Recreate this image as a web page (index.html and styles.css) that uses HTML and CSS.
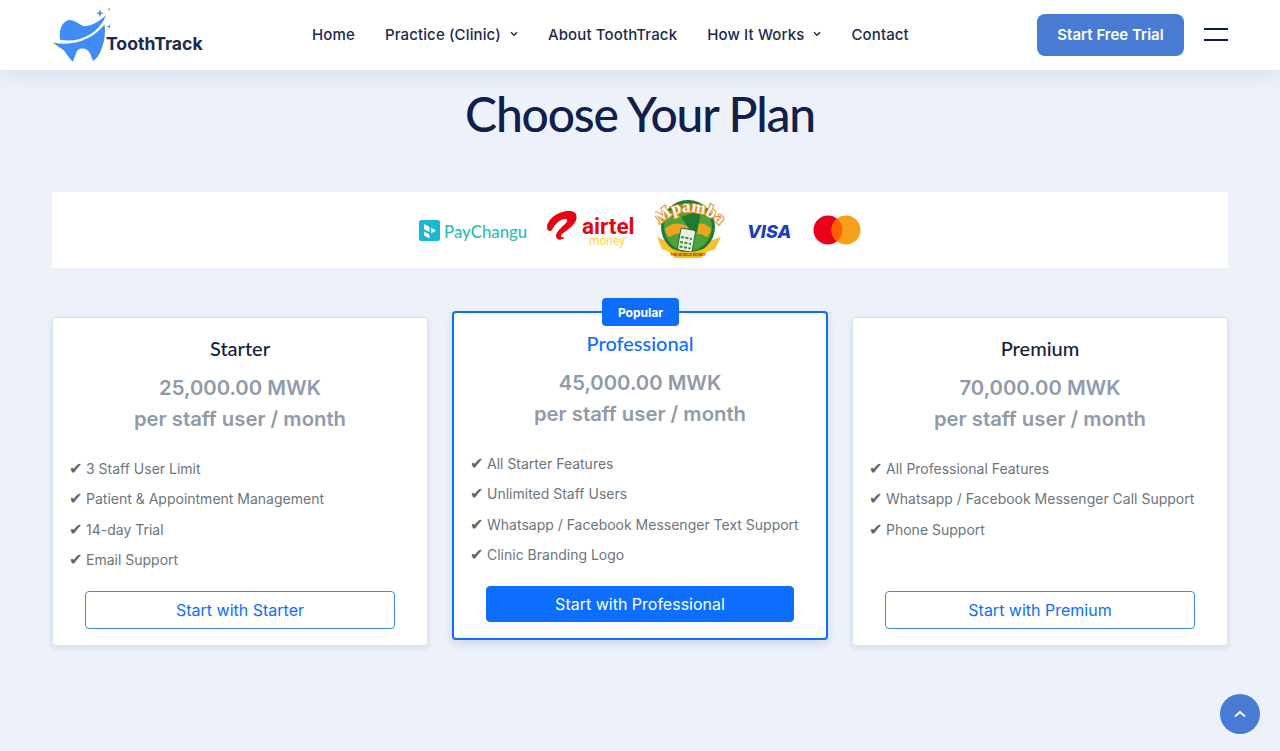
FILE: index.html
```html
<!DOCTYPE html>
<html lang="en">
<head>
<meta charset="utf-8">
<title>ToothTrack - Choose Your Plan</title>
<link rel="stylesheet" href="styles.css">
</head>
<body>
<header class="site-header">
  <div class="header-inner">
    <a class="logo" href="#">
      <svg class="logo-mark" viewBox="30 20 180 175" aria-hidden="true">
        <path fill="#3f8cf4" d="M60 122C56 96 62 72 84 63C98 60 112 72 130 81C150 82 178 68 198 48C190 72 172 92 150 106C124 122 92 128 60 122Z"/>
        <path fill="#3f8cf4" d="M38 130C96 142 156 124 194 76C198 104 192 134 184 152C178 168 170 178 160 186C152 170 150 148 126 148C106 148 108 172 98 188C88 176 80 166 72 154C60 146 48 138 38 130Z"/>
        <path fill="#3f8cf4" d="M180 30L183 39L191 42L183 45L180 54L177 45L169 42L177 39Z"/>
        <path fill="#3f8cf4" d="M215 17L218.500 26.500L228 30L218.500 33.500L215 43L211.500 33.500L203 30L211.500 26.500Z"/>
        <path fill="#3f8cf4" d="M212 70L215 79L224 82L215 85L212 94L209 85L200 82L209 79Z"/>
      </svg>
      <span class="logo-text">ToothTrack</span>
    </a>
    <nav class="main-nav">
      <a href="#">Home</a>
      <a href="#" class="has-caret">Practice (Clinic)
        <svg class="caret" viewBox="0 0 8 6" aria-hidden="true"><path d="M1 1.200L4 4.200L7 1.200"/></svg>
      </a>
      <a href="#">About ToothTrack</a>
      <a href="#" class="has-caret">How It Works
        <svg class="caret" viewBox="0 0 8 6" aria-hidden="true"><path d="M1 1.200L4 4.200L7 1.200"/></svg>
      </a>
      <a href="#">Contact</a>
    </nav>
    <div class="header-actions">
      <a class="trial-btn" href="#">Start Free Trial</a>
      <button class="burger" aria-label="Menu"><span></span><span></span></button>
    </div>
  </div>
</header>

<main class="pricing">
  <h1 class="pricing-title">Choose Your Plan</h1>

  <div class="pay-strip">
    <svg class="pay-logo pay-changu" viewBox="0 0 108 26">
      <rect x="0" y="2" width="21" height="21" rx="2.500" fill="#1cb6d2"/>
      <path fill="#fff" d="M5 6L10.500 9V14L5 11.200ZM5 13.500L10.500 16.500V20.500L5 17.500ZM12 9.800L17 12.500L12 15.500Z"/>
      <text x="25" y="19.500" class="t-pay">PayChangu</text>
    </svg>
    <svg class="pay-logo pay-airtel" viewBox="0 0 88 40">
      <path fill="#e40613" d="M0 17C1 8 12 1 22 1C27 1 30 3 29.500 8C29 14 22 19 15 24C13 26 14 28 18 27.500C14 31 9 30 9 26C9 22 14 18 18 14C21 11 21 9 18 9C13 9 8 14 5 20C3 22 0 21 0 17Z"/>
      <text x="35" y="23.500" class="t-airtel">airtel</text>
      <text x="42" y="35" class="t-money">money</text>
    </svg>
    <svg class="pay-logo pay-mpamba" viewBox="0 0 72 62">
      <path fill="#fbc02d" d="M2 38L12 42L20 50H46L54 42L66 38L60 50L52 53L46 59H20L14 53L7 50Z"/>
      <circle cx="33" cy="28" r="27" fill="#1f7a34"/>
      <circle cx="33" cy="28" r="24" fill="#4ea33a"/>
      <path fill="#f2a31e" d="M10 30C18 22 26 24 33 28C40 24 50 22 56 30C55 34 54 36 52 38C42 32 24 32 14 38C12 36 11 34 10 30Z"/>
      <path fill="#1f7a34" d="M26 18L38 14L46 12L42 34L34 30Z"/>
      <rect x="24" y="30" width="15" height="22" rx="2" transform="rotate(10 31 41)" fill="#e8f2e2" stroke="#2a6b33"/>
      <path fill="none" stroke="#3b8a3f" stroke-width="2" stroke-dasharray="3 1.500" d="M26 38L37 40M25 43L36 45M24.500 47.500L35.500 49.500"/>
      <path id="mp-arc" fill="none" d="M3 31C12 7 56 7 67 31"/>
      <text class="t-mpamba"><textPath href="#mp-arc" startOffset="50%" text-anchor="middle">Mpamba</textPath></text>
      <path fill="#f5b81f" d="M18 50C28 54 38 54 48 50L46 57C38 60 28 60 20 57Z"/>
      <text x="33" y="56.500" text-anchor="middle" class="t-mobile">THE MOBILE MONEY</text>
    </svg>
    <svg class="pay-logo pay-visa" viewBox="0 0 45 22"><text x="0" y="18.500" class="t-visa">VISA</text></svg>
    <svg class="pay-logo pay-mc" viewBox="2 0 50 30">
      <circle cx="18" cy="15" r="14.500" fill="#eb001b"/>
      <circle cx="36" cy="15" r="14.500" fill="#f79e1b"/>
      <path fill="#ff5f00" d="M27 3.700A14.500 14.500 0 0 1 27 26.300A14.500 14.500 0 0 1 27 3.700Z"/>
    </svg>
  </div>

  <div class="plans">
    <article class="plan">
      <h2 class="plan-name">Starter</h2>
      <p class="plan-price">25,000.00 MWK<br>per staff user / month</p>
      <ul class="features">
        <li>3 Staff User Limit</li>
        <li>Patient &amp; Appointment Management</li>
        <li>14-day Trial</li>
        <li>Email Support</li>
      </ul>
      <a class="plan-btn" href="#">Start with Starter</a>
    </article>

    <article class="plan plan-featured">
      <span class="badge">Popular</span>
      <h2 class="plan-name">Professional</h2>
      <p class="plan-price">45,000.00 MWK<br>per staff user / month</p>
      <ul class="features">
        <li>All Starter Features</li>
        <li>Unlimited Staff Users</li>
        <li>Whatsapp / Facebook Messenger Text Support</li>
        <li>Clinic Branding Logo</li>
      </ul>
      <a class="plan-btn" href="#">Start with Professional</a>
    </article>

    <article class="plan">
      <h2 class="plan-name">Premium</h2>
      <p class="plan-price">70,000.00 MWK<br>per staff user / month</p>
      <ul class="features">
        <li>All Professional Features</li>
        <li>Whatsapp / Facebook Messenger Call Support</li>
        <li>Phone Support</li>
      </ul>
      <a class="plan-btn" href="#">Start with Premium</a>
    </article>
  </div>

  <hr class="divider">
</main>

<a class="to-top" href="#" aria-label="Back to top">
  <svg viewBox="0 0 12 8" aria-hidden="true"><path d="M1.500 6L6 2L10.500 6"/></svg>
</a>
</body>
</html>
```

FILE: styles.css
```css
* { box-sizing: border-box; }
html, body { margin: 0; padding: 0; }
body {
  background: #ecf1fa;
  font-family: Inter, "Liberation Sans", sans-serif;
  color: #14213d;
  height: 751px;
  overflow: hidden;
}
a { text-decoration: none; color: inherit; }

.site-header {
  height: 70px;
  background: #fff;
  box-shadow: 0 4px 24px rgba(20, 40, 90, 0.09);
  position: relative;
  z-index: 2;
}
.header-inner {
  width: 1176px;
  height: 70px;
  margin: 0 auto;
  display: flex;
  align-items: center;
}
.logo {
  width: 260px;
  height: 70px;
  margin-left: -2px;
  margin-right: 2px;
  display: flex;
  align-items: flex-start;
  padding-top: 6px;
}
.logo-mark { width: 60px; height: 58px; flex: none; }
.logo-text {
  margin: 28px 0 0 -4px;
  font-size: 17.600px;
  font-weight: 700;
  line-height: 20px;
  color: #1b2a4e;
}
.main-nav {
  display: flex;
  gap: 30px;
  margin-bottom: 2px;
  font-size: 15px;
  font-weight: 500;
  letter-spacing: 0.130px;
  color: #1b2a4e;
}
.has-caret { display: flex; align-items: center; gap: 9px; }
.caret { width: 8px; height: 6px; fill: none; stroke: #1b2a4e; stroke-width: 1.500; }
.header-actions {
  margin-left: auto;
  display: flex;
  align-items: center;
  gap: 20px;
}
.trial-btn {
  width: 147px;
  height: 42px;
  padding-bottom: 2px;
  display: flex;
  align-items: center;
  justify-content: center;
  background: #4a7bd4;
  color: #fff;
  border-radius: 8px;
  font-size: 15px;
  font-weight: 600;
}
.burger {
  width: 24px;
  height: 13px;
  padding: 0;
  margin-bottom: 1px;
  border: 0;
  background: none;
  display: flex;
  flex-direction: column;
  justify-content: space-between;
}
.burger span { display: block; height: 2px; background: #0c1a52; }

.pricing {
  width: 1176px;
  margin: 0 auto;
  padding-top: 14px;
}
.pricing-title {
  margin: 0 0 48px;
  text-align: center;
  font-family: Lato, sans-serif;
  font-size: 48px;
  font-weight: 500;
  letter-spacing: -1.200px;
  line-height: 60px;
  color: #10204a;
}
.pay-strip {
  height: 76px;
  background: #fff;
  display: flex;
  align-items: center;
  justify-content: center;
  gap: 20px;
}
.pay-logo { display: block; flex: none; }
.pay-changu { width: 108px; height: 26px; margin-top: 2px; }
.pay-airtel { width: 88px; height: 40px; }
.pay-mpamba { width: 72px; height: 62px; }
.pay-visa { width: 45px; height: 22px; }
.pay-mc { width: 50px; height: 30px; }
.t-pay { font: 500 16.800px Lato, sans-serif; fill: #2cbdb4; }
.t-airtel { font: 700 22.500px Roboto, sans-serif; fill: #e40613; }
.t-money { font: 400 12px Roboto, sans-serif; fill: #fdd835; }
.t-visa { font: italic 800 18px Inter, sans-serif; fill: #1a3fbb; }
.t-mpamba {
  font: 700 17px "Liberation Serif", serif;
  fill: #fff;
  stroke: #ea8a1c;
  stroke-width: 2px;
  paint-order: stroke;
}
.t-mobile { font: 700 3.500px "Liberation Sans", sans-serif; fill: #8a3a10; }

.plans {
  display: grid;
  grid-template-columns: repeat(3, 1fr);
  gap: 24px;
  margin-top: 49px;
  align-items: start;
}
.plan {
  position: relative;
  height: 329px;
  background: #fff;
  border: 1px solid #dde2ea;
  border-radius: 4px;
  box-shadow: 0 2px 6px rgba(20, 40, 90, 0.1);
  padding: 18px 16px 0;
  display: flex;
  flex-direction: column;
}
.plan-featured {
  margin-top: -6px;
  border: 2px solid #0d6efd;
  padding: 18px 16px 0;
  box-shadow: 0 4px 10px rgba(20, 40, 90, 0.12);
}
.badge {
  position: absolute;
  top: -15px;
  left: 148px;
  width: 77px;
  height: 28px;
  display: flex;
  align-items: center;
  justify-content: center;
  background: #0d6efd;
  color: #fff;
  font-size: 12px;
  font-weight: 700;
  border-radius: 4px;
}
.plan-name {
  margin: 0;
  text-align: center;
  font-family: Lato, sans-serif;
  font-size: 20px;
  font-weight: 500;
  line-height: 24px;
  color: #14213d;
}
.plan-featured .plan-name { color: #0d6efd; }
.plan-price {
  margin: 13px 0 0;
  text-align: center;
  font-size: 20.300px;
  font-weight: 600;
  line-height: 30.500px;
  color: #8f9baa;
}
.features {
  list-style: none;
  margin: 24px 0 0;
  padding: 0;
  font-size: 14px;
  line-height: 21px;
  color: #6c757d;
}
.features li { margin-bottom: 9.400px; }
.features li::before {
  content: "\2714";
  display: inline-block;
  width: 17px;
  line-height: 0;
  font-family: "DejaVu Sans", sans-serif;
  font-size: 16px;
  color: #5c6670;
}
.plan-btn {
  position: absolute;
  left: 32px;
  right: 32px;
  top: 273px;
  height: 38px;
  display: flex;
  align-items: center;
  justify-content: center;
  border: 1px solid #3f87e5;
  border-radius: 4px;
  color: #0d6efd;
  font-size: 16px;
}
.plan-featured .plan-btn {
  top: 273px;
  height: 36px;
  background: #0d6efd;
  border-color: #0d6efd;
  color: #fff;
}
.divider {
  margin: 72px 0 0;
  border: 0;
  border-top: 1px solid #e7ecf5;
}
.to-top {
  position: fixed;
  right: 20px;
  bottom: 17px;
  width: 40px;
  height: 40px;
  border-radius: 50%;
  background: #4a7bd4;
  display: flex;
  align-items: center;
  justify-content: center;
}
.to-top svg { width: 12px; height: 8px; fill: none; stroke: #fff; stroke-width: 1.800; stroke-linecap: round; }
```
